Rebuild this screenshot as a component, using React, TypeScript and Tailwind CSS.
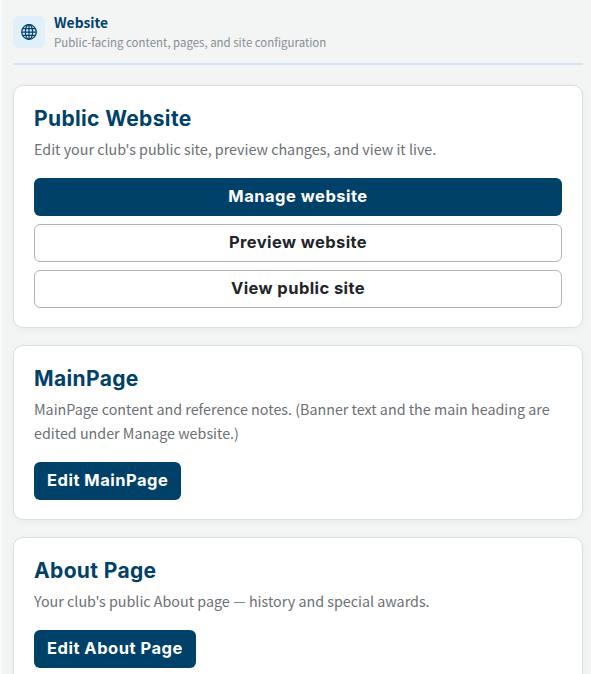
import type { ReactNode } from "react";

const body = "font-['Noto_Sans_CJK_SC','Source_Sans_Pro',sans-serif]";
const display = "font-['Inter','Liberation_Sans',sans-serif]";

function GlobeIcon() {
  return (
    <svg viewBox="0 0 16 16" className="w-4 h-4 text-[#00416a]" fill="none" stroke="currentColor" strokeWidth="1.25">
      <circle cx="8" cy="8" r="7.3" />
      <ellipse cx="8" cy="8" rx="3.6" ry="7.3" />
      <path d="M8 .7v14.6M.7 8h14.6M1.8 4.6h12.4M1.8 11.4h12.4" />
    </svg>
  );
}

function Card({ title, text, children }: { title: string; text: ReactNode; children: ReactNode }) {
  return (
    <section className="bg-white border border-[#dcdfe0] rounded-[10px] px-5 pt-[21px] pb-[19.5px] shadow-[0_2px_10px_rgba(0,0,0,0.04)]">
      <h2 className={`${display} text-[21px] leading-[24px] font-bold tracking-[0.36px] text-[#00416a]`}>{title}</h2>
      <p className={`${body} text-[14.3px] leading-[23.6px] text-[#6b7075] mt-[6px] mb-[17.4px]`}>{text}</p>
      {children}
    </section>
  );
}

function PrimaryButton({ children }: { children: ReactNode }) {
  return (
    <button className={`${display} h-[38px] px-[13px] pb-px rounded-[6px] bg-[#00416a] text-white text-[16.5px] tracking-[0.5px] font-bold`}>
      {children}
    </button>
  );
}

function OutlineButton({ children }: { children: ReactNode }) {
  return (
    <button className={`${display} h-[38px] w-full pb-px rounded-[6px] bg-white border border-[#adb5b8] text-[#212529] text-[16.5px] tracking-[0.42px] font-bold`}>
      {children}
    </button>
  );
}

export default function App() {
  return (
    <div className="h-[674px] overflow-hidden bg-[#f3f5f5] border-l-2 border-[#f9fafa] pl-[11px] pr-2">
      {/* Page header */}
      <header className="flex items-start gap-[9px] pt-[13px] pb-[9px] border-b-2 border-[#d4e6f6]">
        <div className="w-8 h-8 mt-[3px] rounded-[6px] bg-[#e1effb] flex items-center justify-center">
          <GlobeIcon />
        </div>
        <div>
          <div className={`${body} text-[13.8px] leading-[18px] font-bold text-[#00416a]`}>Website</div>
          <div className={`${body} text-[11.45px] leading-[23px] text-[#858c93]`}>
            Public-facing content, pages, and site configuration
          </div>
        </div>
      </header>

      <div className="flex flex-col gap-[16.7px] mt-[20px]">
        <Card title="Public Website" text="Edit your club's public site, preview changes, and view it live.">
          <div className="flex flex-col gap-2">
            <PrimaryButton>Manage website</PrimaryButton>
            <OutlineButton>Preview website</OutlineButton>
            <OutlineButton>View public site</OutlineButton>
          </div>
        </Card>
        <Card
          title="MainPage"
          text="MainPage content and reference notes. (Banner text and the main heading are edited under Manage website.)"
        >
          <PrimaryButton>Edit MainPage</PrimaryButton>
        </Card>
        <Card title="About Page" text="Your club's public About page — history and special awards.">
          <PrimaryButton>Edit About Page</PrimaryButton>
        </Card>
      </div>
    </div>
  );
}
